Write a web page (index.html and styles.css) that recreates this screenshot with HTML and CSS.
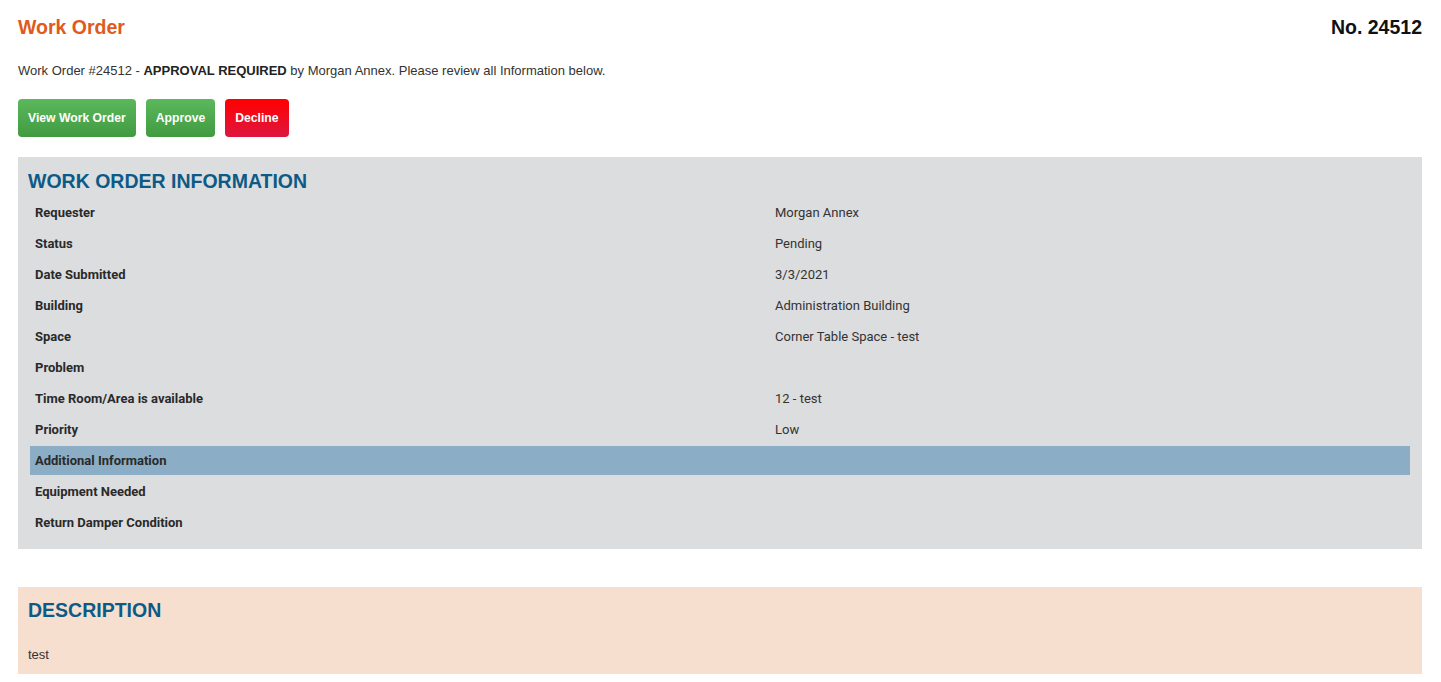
FILE: index.html
```html
<!DOCTYPE html>
<html lang="en">
<head>
<meta charset="UTF-8">
<meta name="viewport" content="width=device-width, initial-scale=1.0">
<title>Work Order 24512</title>
<link rel="stylesheet" href="styles.css">
</head>
<body>
<div class="page">
  <div class="top">
    <h1 class="title">Work Order</h1>
    <div class="number">No. 24512</div>
  </div>
  <p class="intro">Work Order #24512 - <b>APPROVAL REQUIRED</b> by Morgan Annex. Please review all Information below.</p>
  <div class="actions">
    <button class="btn green">View Work Order</button>
    <button class="btn green">Approve</button>
    <button class="btn red">Decline</button>
  </div>

  <section class="panel info">
    <h2>WORK ORDER INFORMATION</h2>
    <div class="rows">
      <div class="row"><span class="lbl">Requester</span><span class="val">Morgan Annex</span></div>
      <div class="row"><span class="lbl">Status</span><span class="val">Pending</span></div>
      <div class="row"><span class="lbl">Date Submitted</span><span class="val">3/3/2021</span></div>
      <div class="row"><span class="lbl">Building</span><span class="val">Administration Building</span></div>
      <div class="row"><span class="lbl">Space</span><span class="val">Corner Table Space - test</span></div>
      <div class="row"><span class="lbl">Problem</span><span class="val"></span></div>
      <div class="row"><span class="lbl">Time Room/Area is available</span><span class="val">12 - test</span></div>
      <div class="row"><span class="lbl">Priority</span><span class="val">Low</span></div>
      <div class="row sub"><span class="lbl">Additional Information</span><span class="val"></span></div>
      <div class="row"><span class="lbl">Equipment Needed</span><span class="val"></span></div>
      <div class="row"><span class="lbl">Return Damper Condition</span><span class="val"></span></div>
    </div>
  </section>

  <section class="panel desc">
    <h2>DESCRIPTION</h2>
    <p>test</p>
  </section>
</div>
</body>
</html>
```

FILE: styles.css
```css
:root {
  --orange: #e05a20;
  --blue: #0d5a86;
  --gray-bg: #dcdddf;
  --sub-bg: #8badc6;
  --peach: #f7dfcf;
  --text: #333;
}
body { margin: 0; font-family: Arial, "Liberation Sans", sans-serif; color: var(--text); background: #fff; }
.page { padding: 15px 19px 0 18px; }
.top { display: flex; justify-content: space-between; align-items: center; height: 24px; }
.title { margin: 0; font-size: 19.5px; font-weight: bold; color: var(--orange); }
.number { font-size: 19.5px; font-weight: bold; color: #111; }
.intro { margin: 24px 0 0; font-size: 13px; line-height: 15px; }
.intro b { color: #222; }
.actions { display: flex; gap: 10px; margin-top: 21px; }
.btn {
  height: 38px; padding: 0 10px; border: none; border-radius: 4px; color: #fff;
  font-family: Arial, "Liberation Sans", sans-serif; font-size: 12.2px; font-weight: bold; cursor: pointer;
}
.btn.green { background: linear-gradient(#5cb85c, #419a41); }
.btn.red { background: linear-gradient(#ff0000, #dd1740); }
.panel { margin-top: 20px; padding: 12px; }
.panel h2 { margin: 0 0 0 -2px; font-size: 19.5px; line-height: 24px; color: var(--blue); }
.info { background: var(--gray-bg); }
.rows { margin-top: 5px; display: flex; flex-direction: column; gap: 2px; }
.row {
  display: grid; grid-template-columns: 740px 1fr; height: 29px; align-items: center;
  font-family: Roboto, "Noto Sans", sans-serif; font-size: 13px;
}
.row .lbl { padding-left: 5px; font-weight: bold; color: #2a2a2a; }
.row .val { padding-left: 5px; color: #333; }
.row.sub { background: var(--sub-bg); }
.desc { margin-top: 38px; padding: 11px 12px 12px 10px; background: var(--peach); }
.desc h2 { margin: 0; }
.desc p { margin: 26px 0 0; font-size: 13px; line-height: 14px; }
```
